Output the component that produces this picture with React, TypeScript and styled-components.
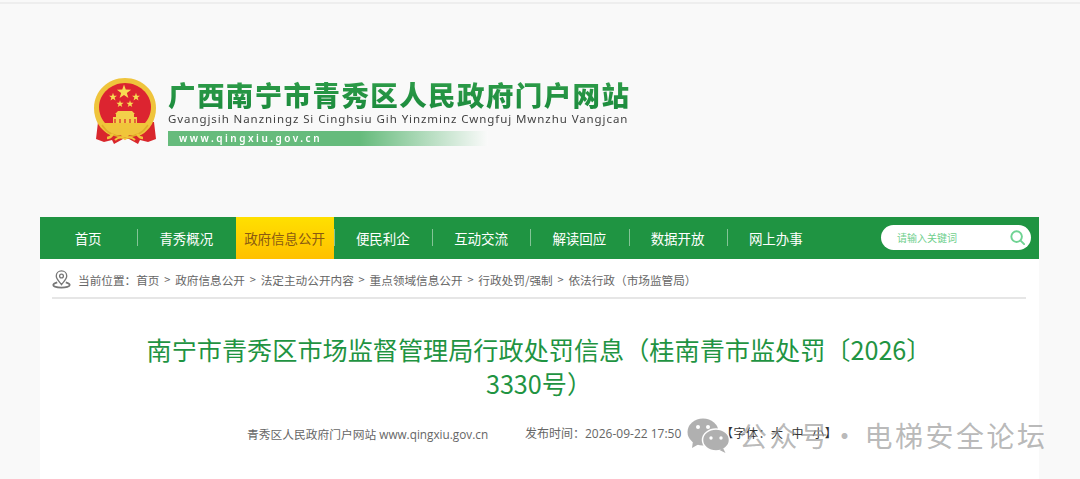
import React from "react";
import styled, { createGlobalStyle } from "styled-components";

const CJK = `"Noto Sans CJK SC", "Open Sans", sans-serif`;

const Global = createGlobalStyle`
  html, body { margin: 0; padding: 0; background: #f9f9f9; overflow: hidden; }
  body { font-family: "Open Sans", "Noto Sans CJK SC", sans-serif; }
`;

const Page = styled.div`
  position: relative;
  width: 1080px;
  height: 479px;
  overflow: hidden;
  border-top: 2px solid #f9f9f9;
  box-sizing: border-box;
`;
const TopRule = styled.div`
  height: 2px;
  background: #eeeeee;
`;
const Wrap = styled.div`
  width: 999px;
  margin-left: 40px;
`;
const Header = styled.header`
  height: 213px;
  display: flex;
  align-items: flex-start;
  gap: 10px;
  padding: 73px 0 0 53px;
  box-sizing: border-box;
`;
const EmblemBox = styled.div`
  display: flex;
  filter: blur(0.35px);
`;
const Brand = styled.div`
  display: flex;
  flex-direction: column;
  width: 480px;
  filter: blur(0.25px);
`;
const SiteTitle = styled.div`
  font-family: ${CJK};
  font-weight: 900;
  font-size: 27.5px;
  letter-spacing: 1.4px;
  line-height: 34px;
  white-space: nowrap;
  background: linear-gradient(180deg, #2f9e4a 0%, #1b8a3c 100%);
  -webkit-background-clip: text;
  background-clip: text;
  color: transparent;
`;
const Pinyin = styled.div`
  font-family: "Noto Sans", sans-serif;
  font-size: 11.5px;
  letter-spacing: 0.92px;
  line-height: 14px;
  margin-top: 1px;
  color: #444;
  white-space: nowrap;
`;
const UrlBar = styled.div`
  width: 320px;
  height: 15px;
  margin-top: 5px;
  padding-left: 11px;
  box-sizing: border-box;
  background: linear-gradient(90deg, #66bb7c 0%, #66bb7c 60%, #fafafa 100%);
  color: #fff;
  font-family: "Noto Sans", sans-serif;
  font-weight: 600;
  font-size: 10px;
  line-height: 15px;
  letter-spacing: 2.5px;
`;
const Nav = styled.nav`
  height: 42px;
  background: #1f9442;
  display: flex;
  align-items: stretch;
`;
const NavList = styled.div`
  display: flex;
  width: 786px;
  margin-left: -1px;
`;
const NavItem = styled.div<{ $active?: boolean }>`
  flex: 1;
  position: relative;
  display: flex;
  align-items: center;
  justify-content: center;
  font-family: ${CJK};
  font-size: 13.5px;
  color: ${(p) => (p.$active ? "#8a5a12" : "#fff")};
  background: ${(p) => (p.$active ? "linear-gradient(180deg,#ffe000,#ffc000)" : "transparent")};
  &::after {
    content: "";
    position: absolute;
    right: -1px;
    top: 12px;
    height: 17px;
    width: 1px;
    background: rgba(255, 255, 255, 0.45);
  }
  &:last-child::after { display: none; }
`;
const SearchCell = styled.div`
  margin-left: 56px;
  margin-top: 8px;
  width: 150px;
  height: 25px;
  border-radius: 13px;
  background: #fff;
  display: flex;
  align-items: center;
  justify-content: space-between;
  padding: 0 6px 0 16px;
  box-sizing: border-box;
  font-family: ${CJK};
  font-size: 10px;
  color: #6fcf8d;
`;
const Main = styled.main`
  background: #fff;
  height: 220px;
  padding: 0 13px 0 12px;
  box-sizing: border-box;
`;
const Crumbs = styled.div`
  height: 40px;
  padding-top: 2px;
  box-sizing: border-box;
  border-bottom: 2px solid #e6e6e6;
  display: flex;
  align-items: center;
  font-family: ${CJK};
  font-size: 11.65px;
  color: #666;
`;
const CrumbLabel = styled.span`
  margin: 0 0 0 7px;
`;
const CrumbSep = styled.span`
  width: 15.7px;
  text-align: center;
  font-size: 11px;
`;
const Title = styled.h1`
  margin: 33px 0 0;
  padding: 0 90px;
  font-family: ${CJK};
  font-size: 25.15px;
  font-weight: 400;
  line-height: 34px;
  text-align: center;
  color: #1f9442;
`;
const Meta = styled.div`
  margin-top: 25px;
  padding-left: 195px;
  display: flex;
  font-size: 12px;
  line-height: 18px;
  color: #666;
  white-space: nowrap;
`;
const Source = styled.span`
  width: 278px;
  font-size: 11.75px;
`;
const Published = styled.span`
  width: 196px;
`;
const FontSize = styled.span`
  color: #333;
  letter-spacing: 0.5px;
  word-spacing: 4.5px;
`;
const Watermark = styled.div`
  position: absolute;
  left: 687px;
  top: 413px;
  display: flex;
  align-items: center;
  color: rgba(150, 150, 150, 0.68);
  font-family: ${CJK};
  font-size: 28px;
  letter-spacing: 2.5px;
  white-space: nowrap;
`;
const WaterText = styled.span`
  margin-left: 9px;
`;
const WaterDot = styled.span`
  width: 34px;
  padding-right: 6px;
  box-sizing: border-box;
  text-align: center;
  letter-spacing: 0;
`;

const star = (cx: number, cy: number, r: number) => {
  const pts: string[] = [];
  for (let i = 0; i < 10; i++) {
    const a = -Math.PI / 2 + (i * Math.PI) / 5;
    const d = i % 2 ? r * 0.4 : r;
    pts.push(`${(cx + d * Math.cos(a)).toFixed(2)},${(cy + d * Math.sin(a)).toFixed(2)}`);
  }
  return pts.join(" ");
};

const Emblem = () => (
  <EmblemBox>
    <svg width="65" height="70" viewBox="0 0 65 70">
      <path d="M5 45l-2 17 8 3 8-2 2 4 9-5h6l9 5 2-4 8 2 8-3-2-17z" fill="#d9262c" />
      <path d="M32 1C49 1 63 14 63 31c0 12-6 22-15 27H17C7 53 1 43 1 31 1 14 15 1 32 1z" fill="#efc43c" />
      <path d="M32 6c14 0 26 11 26 24 0 7-3 13-7 17H13C9 43 6 37 6 30 6 17 18 6 32 6z" fill="#dc2430" />
      <polygon points={star(31, 15, 7.5)} fill="#f7dc52" />
      <polygon points={star(20, 20, 4.2)} fill="#f7dc52" />
      <polygon points={star(43, 20, 4.2)} fill="#f7dc52" />
      <polygon points={star(27, 27, 3.8)} fill="#f7dc52" />
      <polygon points={star(37, 27, 3.8)} fill="#f7dc52" />
      <path d="M25 34h14l3 3H22zM23 37h18v3H23zM20 40h24v6H20z" fill="#f3cf4a" />
      <path d="M8 46h48v5H8z" fill="#f0c53a" />
      <path d="M22 42v4M27 42v4M32 42v4M37 42v4M42 42v4" stroke="#d9262c" strokeWidth="1.2" />
      <path d="M9 48c5 8 14 12 23 12s18-4 23-12" fill="none" stroke="#e0ae2a" strokeWidth="1.5" />
      <circle cx="32" cy="56" r="4.500" fill="#f0c53a" />
      <path d="M20 57c-2 3-4 4-6 4M44 57c2 3 4 4 6 4" stroke="#f0c53a" strokeWidth="2.500" fill="none" />
      <path d="M22 63c3-3 7-3 10-1 3-2 7-2 10 1" fill="none" stroke="#f0c53a" strokeWidth="2" />
    </svg>
  </EmblemBox>
);

const PinIcon = () => (
  <svg width="19" height="20" viewBox="0 0 20 20" fill="none" stroke="#777" strokeWidth="1.4">
    <path d="M10 1.500c-3.200 0-5.500 2.400-5.500 5.400 0 3.300 3.200 5.900 5.500 9 2.300-3.100 5.500-5.700 5.500-9 0-3-2.300-5.400-5.500-5.400z" />
    <circle cx="10" cy="6.800" r="2" />
    <path d="M5.500 13.500C3 14.200 1.300 15.200 1.300 16.400c0 1.500 3.900 2.700 8.700 2.700s8.700-1.200 8.700-2.700c0-1.200-1.700-2.200-4.200-2.900" strokeWidth="1.800" />
  </svg>
);

const SearchIcon = () => (
  <svg width="15" height="15" viewBox="0 0 17 17" fill="none" stroke="#6fd393" strokeWidth="2.200">
    <circle cx="7.500" cy="7.500" r="6" />
    <path d="M12 12l4 4" strokeLinecap="round" />
  </svg>
);

const WeChat = () => (
  <svg width="43" height="35" viewBox="0 0 43 35">
    <ellipse cx="16" cy="14" rx="15.500" ry="13.500" fill="#b0b0b0" />
    <path d="M6 23l-1 7 7-4z" fill="#b0b0b0" />
    <ellipse cx="29" cy="22" rx="13.500" ry="11" fill="#b0b0b0" stroke="#fff" strokeWidth="1.500" />
    <path d="M36 30l2.500 5-6-3z" fill="#b0b0b0" />
    <circle cx="11" cy="9" r="2" fill="#fff" />
    <circle cx="21" cy="9" r="2" fill="#fff" />
    <circle cx="24" cy="20" r="1.700" fill="#fff" />
    <circle cx="34" cy="20" r="1.700" fill="#fff" />
  </svg>
);

const navItems = ["首页", "青秀概况", "政府信息公开", "便民利企", "互动交流", "解读回应", "数据开放", "网上办事"];
const crumbs = ["首页", "政府信息公开", "法定主动公开内容", "重点领域信息公开", "行政处罚/强制", "依法行政（市场监管局）"];

export default function App() {
  return (
    <Page>
      <Global />
      <TopRule />
      <Wrap>
        <Header>
          <Emblem />
          <Brand>
            <SiteTitle>广西南宁市青秀区人民政府门户网站</SiteTitle>
            <Pinyin>Gvangjsih Nanzningz Si Cinghsiu Gih Yinzminz Cwngfuj Mwnzhu Vangjcan</Pinyin>
            <UrlBar>www.qingxiu.gov.cn</UrlBar>
          </Brand>
        </Header>
        <Nav>
          <NavList>
            {navItems.map((n, i) => (
              <NavItem key={n} $active={i === 2}>{n}</NavItem>
            ))}
          </NavList>
          <SearchCell>
            <span>请输入关键词</span>
            <SearchIcon />
          </SearchCell>
        </Nav>
        <Main>
          <Crumbs>
            <PinIcon />
            <CrumbLabel>当前位置：</CrumbLabel>
            {crumbs.map((c, i) => (
              <React.Fragment key={c}>
                {i > 0 && <CrumbSep>&gt;</CrumbSep>}
                <span>{c}</span>
              </React.Fragment>
            ))}
          </Crumbs>
          <Title>南宁市青秀区市场监督管理局行政处罚信息（桂南青市监处罚〔2026〕3330号）</Title>
          <Meta>
            <Source>青秀区人民政府门户网站 www.qingxiu.gov.cn</Source>
            <Published>发布时间：2026-09-22 17:50</Published>
            <FontSize>【字体：大 中 小】</FontSize>
          </Meta>
        </Main>
      </Wrap>
      <Watermark>
        <WeChat />
        <WaterText>公众号</WaterText>
        <WaterDot>·</WaterDot>
        <span>电梯安全论坛</span>
      </Watermark>
    </Page>
  );
}
